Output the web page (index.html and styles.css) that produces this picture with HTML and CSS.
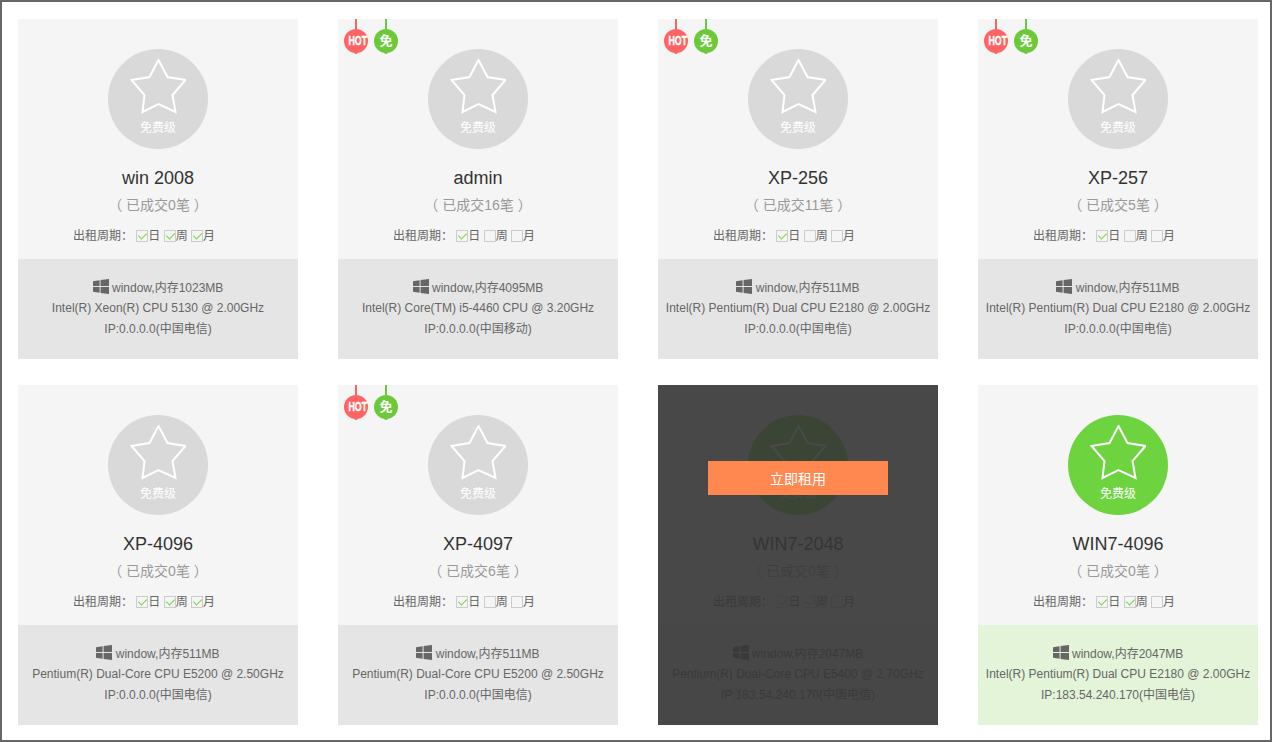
FILE: index.html
```html
<!DOCTYPE html>
<html lang="en">
    <head>
        <meta charset="utf-8"/>
        <title>机器列表</title>
        <link rel="stylesheet" href="styles.css">
    </head>
    <body>
        <div class="container">
            <div class="card">
                <div class="top">
                    <div class="level">
                        <svg class="star" viewBox="0 0 56 56"><polygon points="28.5,1 37.5,18 55.5,21 42.5,36 45.5,53 28.5,45 12.5,53 14.5,36 1.5,21 19.5,18"/></svg>
                        <span>免费级</span>
                    </div>
                    <h1>win 2008</h1>
                    <h2>（ 已成交0笔 ）</h2>
                    <p class="cycle">出租周期： <i class="box on"></i>日 <i class="box on"></i>周 <i class="box on"></i>月</p>
                </div>
                <div class="info">
                    <p><svg class="win" viewBox="0 0 16 15"><path d="M0 2.2 6.6 1.2V7H0ZM7.6 1 16 0V7H7.6ZM0 8H6.6V13.8L0 12.8ZM7.6 8H16V15L7.6 14Z"/></svg> window,内存1023MB</p>
                    <p>Intel(R) Xeon(R) CPU 5130 @ 2.00GHz</p>
                    <p>IP:0.0.0.0(中国电信)</p>
                </div>
            </div>

            <div class="card">
                <div class="tags"><span class="tag hot"><b>HOT</b></span><span class="tag free">免</span></div>
                <div class="top">
                    <div class="level">
                        <svg class="star" viewBox="0 0 56 56"><polygon points="28.5,1 37.5,18 55.5,21 42.5,36 45.5,53 28.5,45 12.5,53 14.5,36 1.5,21 19.5,18"/></svg>
                        <span>免费级</span>
                    </div>
                    <h1>admin</h1>
                    <h2>（ 已成交16笔 ）</h2>
                    <p class="cycle">出租周期： <i class="box on"></i>日 <i class="box"></i>周 <i class="box"></i>月</p>
                </div>
                <div class="info">
                    <p><svg class="win" viewBox="0 0 16 15"><path d="M0 2.2 6.6 1.2V7H0ZM7.6 1 16 0V7H7.6ZM0 8H6.6V13.8L0 12.8ZM7.6 8H16V15L7.6 14Z"/></svg> window,内存4095MB</p>
                    <p>Intel(R) Core(TM) i5-4460 CPU @ 3.20GHz</p>
                    <p>IP:0.0.0.0(中国移动)</p>
                </div>
            </div>

            <div class="card">
                <div class="tags"><span class="tag hot"><b>HOT</b></span><span class="tag free">免</span></div>
                <div class="top">
                    <div class="level">
                        <svg class="star" viewBox="0 0 56 56"><polygon points="28.5,1 37.5,18 55.5,21 42.5,36 45.5,53 28.5,45 12.5,53 14.5,36 1.5,21 19.5,18"/></svg>
                        <span>免费级</span>
                    </div>
                    <h1>XP-256</h1>
                    <h2>（ 已成交11笔 ）</h2>
                    <p class="cycle">出租周期： <i class="box on"></i>日 <i class="box"></i>周 <i class="box"></i>月</p>
                </div>
                <div class="info">
                    <p><svg class="win" viewBox="0 0 16 15"><path d="M0 2.2 6.6 1.2V7H0ZM7.6 1 16 0V7H7.6ZM0 8H6.6V13.8L0 12.8ZM7.6 8H16V15L7.6 14Z"/></svg> window,内存511MB</p>
                    <p>Intel(R) Pentium(R) Dual CPU E2180 @ 2.00GHz</p>
                    <p>IP:0.0.0.0(中国电信)</p>
                </div>
            </div>

            <div class="card">
                <div class="tags"><span class="tag hot"><b>HOT</b></span><span class="tag free">免</span></div>
                <div class="top">
                    <div class="level">
                        <svg class="star" viewBox="0 0 56 56"><polygon points="28.5,1 37.5,18 55.5,21 42.5,36 45.5,53 28.5,45 12.5,53 14.5,36 1.5,21 19.5,18"/></svg>
                        <span>免费级</span>
                    </div>
                    <h1>XP-257</h1>
                    <h2>（ 已成交5笔 ）</h2>
                    <p class="cycle">出租周期： <i class="box on"></i>日 <i class="box"></i>周 <i class="box"></i>月</p>
                </div>
                <div class="info">
                    <p><svg class="win" viewBox="0 0 16 15"><path d="M0 2.2 6.6 1.2V7H0ZM7.6 1 16 0V7H7.6ZM0 8H6.6V13.8L0 12.8ZM7.6 8H16V15L7.6 14Z"/></svg> window,内存511MB</p>
                    <p>Intel(R) Pentium(R) Dual CPU E2180 @ 2.00GHz</p>
                    <p>IP:0.0.0.0(中国电信)</p>
                </div>
            </div>

            <div class="card">
                <div class="top">
                    <div class="level">
                        <svg class="star" viewBox="0 0 56 56"><polygon points="28.5,1 37.5,18 55.5,21 42.5,36 45.5,53 28.5,45 12.5,53 14.5,36 1.5,21 19.5,18"/></svg>
                        <span>免费级</span>
                    </div>
                    <h1>XP-4096</h1>
                    <h2>（ 已成交0笔 ）</h2>
                    <p class="cycle">出租周期： <i class="box on"></i>日 <i class="box on"></i>周 <i class="box on"></i>月</p>
                </div>
                <div class="info">
                    <p><svg class="win" viewBox="0 0 16 15"><path d="M0 2.2 6.6 1.2V7H0ZM7.6 1 16 0V7H7.6ZM0 8H6.6V13.8L0 12.8ZM7.6 8H16V15L7.6 14Z"/></svg> window,内存511MB</p>
                    <p>Pentium(R) Dual-Core CPU E5200 @ 2.50GHz</p>
                    <p>IP:0.0.0.0(中国电信)</p>
                </div>
            </div>

            <div class="card">
                <div class="tags"><span class="tag hot"><b>HOT</b></span><span class="tag free">免</span></div>
                <div class="top">
                    <div class="level">
                        <svg class="star" viewBox="0 0 56 56"><polygon points="28.5,1 37.5,18 55.5,21 42.5,36 45.5,53 28.5,45 12.5,53 14.5,36 1.5,21 19.5,18"/></svg>
                        <span>免费级</span>
                    </div>
                    <h1>XP-4097</h1>
                    <h2>（ 已成交6笔 ）</h2>
                    <p class="cycle">出租周期： <i class="box on"></i>日 <i class="box"></i>周 <i class="box"></i>月</p>
                </div>
                <div class="info">
                    <p><svg class="win" viewBox="0 0 16 15"><path d="M0 2.2 6.6 1.2V7H0ZM7.6 1 16 0V7H7.6ZM0 8H6.6V13.8L0 12.8ZM7.6 8H16V15L7.6 14Z"/></svg> window,内存511MB</p>
                    <p>Pentium(R) Dual-Core CPU E5200 @ 2.50GHz</p>
                    <p>IP:0.0.0.0(中国电信)</p>
                </div>
            </div>

            <div class="card hover">
                <div class="top">
                    <div class="level">
                        <svg class="star" viewBox="0 0 56 56"><polygon points="28.5,1 37.5,18 55.5,21 42.5,36 45.5,53 28.5,45 12.5,53 14.5,36 1.5,21 19.5,18"/></svg>
                        <span>免费级</span>
                    </div>
                    <h1>WIN7-2048</h1>
                    <h2>（ 已成交0笔 ）</h2>
                    <p class="cycle">出租周期： <i class="box on"></i>日 <i class="box on"></i>周 <i class="box"></i>月</p>
                </div>
                <div class="info">
                    <p><svg class="win" viewBox="0 0 16 15"><path d="M0 2.2 6.6 1.2V7H0ZM7.6 1 16 0V7H7.6ZM0 8H6.6V13.8L0 12.8ZM7.6 8H16V15L7.6 14Z"/></svg> window,内存2047MB</p>
                    <p>Pentium(R) Dual-Core CPU E5400 @ 2.70GHz</p>
                    <p>IP:183.54.240.170(中国电信)</p>
                </div>
                <div class="overlay"><button>立即租用</button></div>
            </div>

            <div class="card active">
                <div class="top">
                    <div class="level">
                        <svg class="star" viewBox="0 0 56 56"><polygon points="28.5,1 37.5,18 55.5,21 42.5,36 45.5,53 28.5,45 12.5,53 14.5,36 1.5,21 19.5,18"/></svg>
                        <span>免费级</span>
                    </div>
                    <h1>WIN7-4096</h1>
                    <h2>（ 已成交0笔 ）</h2>
                    <p class="cycle">出租周期： <i class="box on"></i>日 <i class="box on"></i>周 <i class="box"></i>月</p>
                </div>
                <div class="info">
                    <p><svg class="win" viewBox="0 0 16 15"><path d="M0 2.2 6.6 1.2V7H0ZM7.6 1 16 0V7H7.6ZM0 8H6.6V13.8L0 12.8ZM7.6 8H16V15L7.6 14Z"/></svg> window,内存2047MB</p>
                    <p>Intel(R) Pentium(R) Dual CPU E2180 @ 2.00GHz</p>
                    <p>IP:183.54.240.170(中国电信)</p>
                </div>
            </div>
        </div>
    </body>
</html>
```
FILE: styles.css
```css
*{margin:0;padding:0;box-sizing:border-box;}

body{
    font-family: "Liberation Sans", "Noto Sans CJK SC", sans-serif;
    color: #666;
    background: white;
}

.container{
    display: grid;
    grid-template-columns: repeat(4, 280px);
    grid-auto-rows: 340px;
    gap: 26px 40px;
    width: 1272px;
    height: 742px;
    padding: 17px 0 0 16px;
    border: 2px solid #666;
    overflow: hidden;
}

.card{
    position: relative;
    display: flex;
    flex-direction: column;
}

.top{
    height: 240px;
    padding-top: 30px;
    background: #f5f5f5;
    text-align: center;
}

.level{
    display: flex;
    flex-direction: column;
    align-items: center;
    width: 100px;
    height: 100px;
    margin: 0 auto;
    padding-top: 10px;
    border-radius: 50%;
    background: #d9d9d9;
    color: #fff;
    font-size: 12px;
    line-height: 16px;
}

.active .level, .hover .level{
    background: #6dd43f;
}

.star{
    width: 56px;
    height: 56px;
    margin-bottom: 5px;
}

.star polygon{
    fill: none;
    stroke: #fff;
    stroke-width: 2;
}

h1{
    margin-top: 18px;
    font-size: 18px;
    font-weight: normal;
    line-height: 22px;
    color: #333;
}

h2{
    margin-top: 5px;
    font-size: 14px;
    font-weight: normal;
    line-height: 22px;
    color: #999;
}

.cycle{
    margin-top: 12px;
    padding-right: 28px;
    font-size: 12px;
    line-height: 16px;
    color: #666;
}

.box{
    position: relative;
    display: inline-block;
    width: 12px;
    height: 12px;
    border: 1px solid #ccc;
    vertical-align: -2px;
}

.box.on::after{
    content: "";
    position: absolute;
    left: 3px;
    top: 0;
    width: 4px;
    height: 7px;
    border: solid #6dd43f;
    border-width: 0 1.5px 1.5px 0;
    transform: rotate(45deg);
}

.info{
    height: 100px;
    padding-top: 19px;
    background: #e5e5e5;
    text-align: center;
    font-size: 12px;
    line-height: 20px;
}

.info p:last-child{
    margin-top: 1px;
}

.active .info{
    background: #e3f4d9;
}

.win{
    width: 16px;
    height: 15px;
    fill: #666;
    vertical-align: -2px;
}

.tags{
    position: absolute;
    top: 0;
    left: 6px;
    display: flex;
    gap: 6px;
}

.tag{
    position: relative;
    width: 24px;
    height: 24px;
    margin-top: 10px;
    border-radius: 50%;
    color: white;
    font-size: 11px;
    font-weight: bold;
    line-height: 24px;
    text-align: center;
}

.tag::before{
    content: "";
    position: absolute;
    left: 11px;
    top: -10px;
    width: 2px;
    height: 11px;
    background: inherit;
}

.tag::after{
    content: "";
    position: absolute;
    left: 10px;
    bottom: -1px;
    width: 4px;
    height: 4px;
    border-radius: 50%;
    background: inherit;
}

.hot{
    background: #ff6464;
}

.hot b{
    display: inline-block;
    font-size: 13px;
    -webkit-text-stroke: .4px white;
    transform: scaleX(.68);
}

.free{
    background: #6cc93a;
    font-size: 13px;
}

.overlay{
    position: absolute;
    inset: 0;
    display: flex;
    justify-content: center;
    padding-top: 76px;
    background: rgba(53,53,53,.9);
}

button{
    width: 180px;
    height: 34px;
    border: none;
    background: #ff8850;
    color: white;
    font-family: inherit;
    font-size: 14px;
}
```
